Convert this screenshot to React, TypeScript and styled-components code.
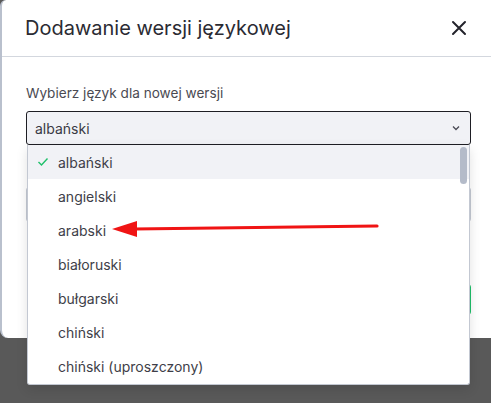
import React from "react";
import styled, { createGlobalStyle } from "styled-components";

const GlobalStyle = createGlobalStyle`
  html, body {
    margin: 0;
    padding: 0;
    background: #595959;
    overflow: hidden;
  }
  body {
    font-family: Inter, "Noto Sans", sans-serif;
  }
`;

const Backdrop = styled.div`
  width: 491px;
  height: 403px;
  background: #595959;
  overflow: hidden;
  position: relative;
`;

const Modal = styled.div`
  width: 520px;
  height: 338px;
  background: #fff;
  border-left: 2px solid #b9c0cd;
  border-radius: 6px 0 0 8px;
  box-sizing: border-box;
  position: relative;
`;

const Header = styled.header`
  height: 57px;
  display: flex;
  align-items: center;
  justify-content: space-between;
  padding: 0 0 0 23px;
  width: 489px;
  box-sizing: border-box;
  border-bottom: 1px solid #d3d7de;
`;

const Title = styled.h1`
  margin: 0;
  font-size: 20px;
  font-weight: 400;
  color: #2b2b33;
`;

const CloseButton = styled.button`
  border: 0;
  background: none;
  padding: 0;
  margin-right: 24px;
  width: 16px;
  height: 16px;
  display: flex;
  color: #23232b;
`;

const Body = styled.div`
  padding: 28px 0 0 24px;
  width: 470px;
  box-sizing: border-box;
`;

const Label = styled.div`
  font-size: 13.6px;
  color: #4a4a52;
  line-height: 16px;
  margin-bottom: 10px;
`;

const SelectWrap = styled.div`
  position: relative;
  width: 445px;
`;

const SelectBox = styled.div`
  height: 34px;
  box-sizing: border-box;
  border: 1px solid #1e1e24;
  border-radius: 3px;
  background: #f1f2f6;
  display: flex;
  align-items: center;
  justify-content: space-between;
  padding: 0 10px 0 8px;
  font-size: 14px;
  color: #3a3a44;
`;

const GhostField = styled.div`
  margin-top: 42px;
  height: 35px;
  width: 445px;
  box-sizing: border-box;
  border: 1px solid #c4c9d3;
  border-radius: 3px;
`;

const Footer = styled.div`
  display: flex;
  justify-content: flex-end;
  margin-top: 62px;
  width: 445px;
`;

const GreenButton = styled.div`
  width: 90px;
  height: 31px;
  border: 1px solid #1fc06a;
  border-radius: 3px;
  box-sizing: border-box;
`;

const Dropdown = styled.ul`
  position: absolute;
  top: 34px;
  left: 1px;
  right: 1px;
  margin: 0;
  padding: 0;
  list-style: none;
  background: #fff;
  border: 1px solid #c3c8d2;
  border-top: 0;
  border-radius: 0 0 3px 3px;
  box-shadow: 0 4px 12px rgba(0, 0, 0, 0.12);
  height: 239px;
  overflow: hidden;
  z-index: 2;
`;

const Option = styled.li<{ $active?: boolean }>`
  height: 34px;
  display: flex;
  align-items: center;
  padding-left: 30px;
  font-size: 14px;
  color: #3e3e48;
  background: ${(p) => (p.$active ? "#f1f2f6" : "#fff")};
  position: relative;
`;

const Check = styled.span`
  position: absolute;
  left: 9px;
  top: 12px;
  display: flex;
`;

const Scrollbar = styled.div`
  position: absolute;
  right: 2px;
  top: 2px;
  width: 7px;
  height: 37px;
  border-radius: 4px;
  background: #b4bbc9;
`;

const Arrow = styled.svg`
  position: absolute;
  left: 110px;
  top: 218px;
  z-index: 3;
`;

const languages = [
  "albański",
  "angielski",
  "arabski",
  "białoruski",
  "bułgarski",
  "chiński",
  "chiński (uproszczony)",
];

export default function App() {
  return (
    <Backdrop>
      <GlobalStyle />
      <Modal>
        <Header>
          <Title>Dodawanie wersji językowej</Title>
          <CloseButton aria-label="Zamknij">
            <svg width="16" height="16" viewBox="0 0 16 16">
              <path d="M2 2 L14 14 M14 2 L2 14" stroke="currentColor" strokeWidth="2" strokeLinecap="round" />
            </svg>
          </CloseButton>
        </Header>
        <Body>
          <Label>Wybierz język dla nowej wersji</Label>
          <SelectWrap>
            <SelectBox>
              <span>albański</span>
              <svg width="8" height="6" viewBox="0 0 8 6">
                <path d="M1 1.5 L4 4.5 L7 1.5" fill="none" stroke="#4a4a55" strokeWidth="1.3" />
              </svg>
            </SelectBox>
            <Dropdown>
              {languages.map((lang, i) => (
                <Option key={lang} $active={i === 0}>
                  {i === 0 && (
                    <Check>
                      <svg width="12" height="10" viewBox="0 0 12 10">
                        <path d="M1.5 5 L4.5 8 L10.5 1.5" fill="none" stroke="#1fc06a" strokeWidth="1.4" />
                      </svg>
                    </Check>
                  )}
                  {lang}
                </Option>
              ))}
              <Scrollbar />
            </Dropdown>
          </SelectWrap>
          <GhostField />
          <Footer>
            <GreenButton />
          </Footer>
        </Body>
      </Modal>
      <Arrow width="270" height="22" viewBox="0 0 270 22">
        <path d="M24 11 L267 8" stroke="#f01414" strokeWidth="3.2" strokeLinecap="round" />
        <path d="M2 11 L27 3 L27 19 Z" fill="#f01414" />
      </Arrow>
    </Backdrop>
  );
}
